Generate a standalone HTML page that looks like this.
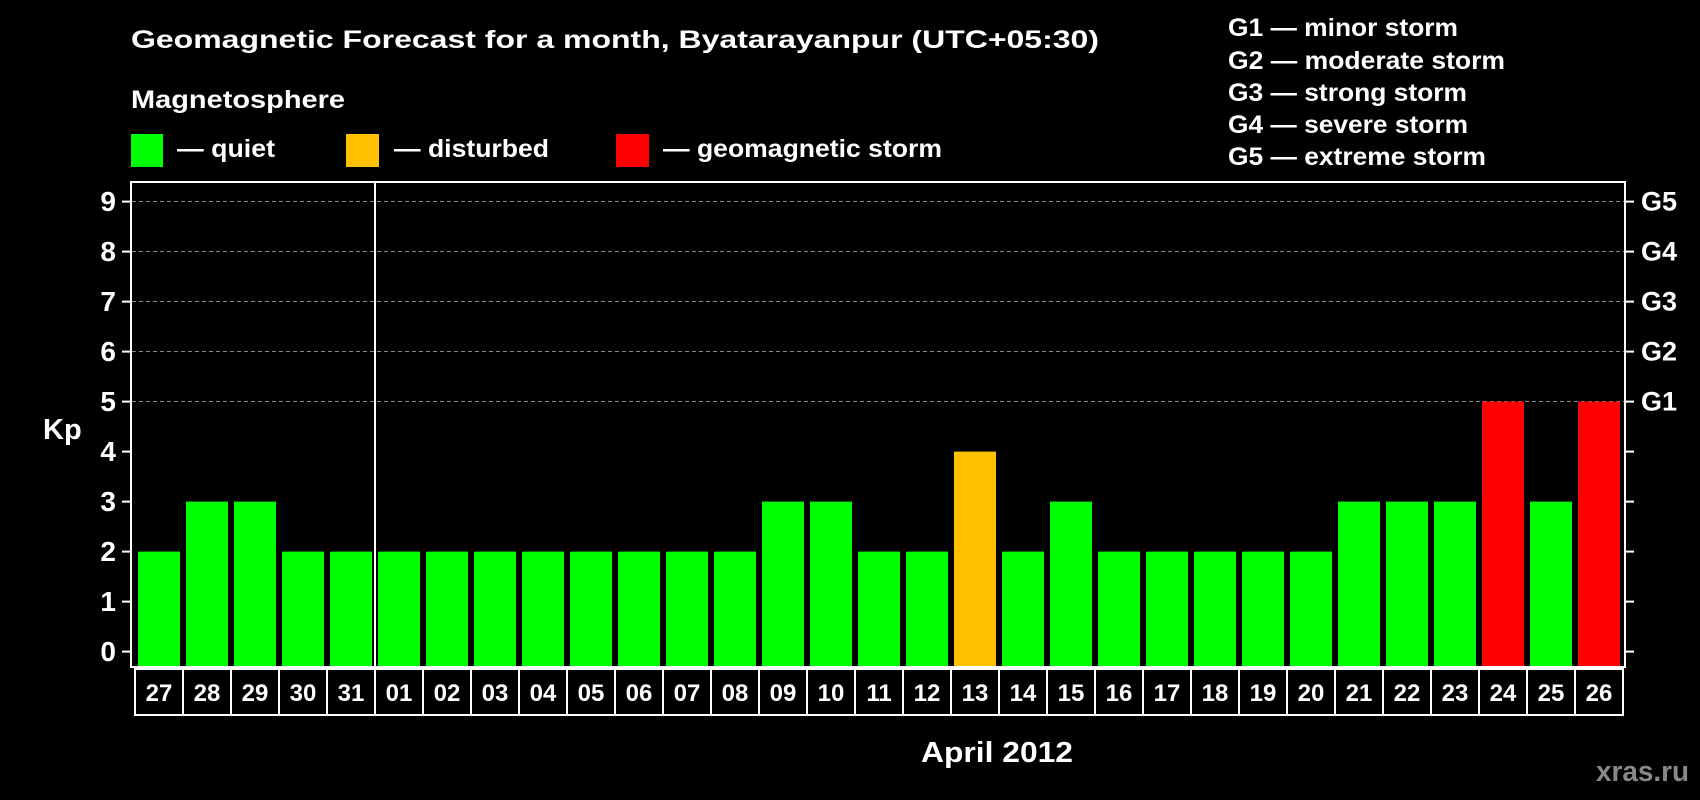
<!DOCTYPE html>
<html><head><meta charset="utf-8"><style>
html,body{margin:0;padding:0;background:#000;width:1700px;height:800px;overflow:hidden}
svg{display:block}
text{font-family:"Liberation Sans",sans-serif;font-weight:bold;fill:#fff}
</style></head><body>
<svg width="1700" height="800" viewBox="0 0 1700 800" xmlns="http://www.w3.org/2000/svg">
<rect width="1700" height="800" fill="#000"/>
<g dominant-baseline="central" font-size="25">
<text x="131" y="40" textLength="968" lengthAdjust="spacingAndGlyphs">Geomagnetic Forecast for a month, Byatarayanpur (UTC+05:30)</text>
<text x="131" y="100" textLength="214" lengthAdjust="spacingAndGlyphs">Magnetosphere</text>
<text x="177" y="149" textLength="98" lengthAdjust="spacingAndGlyphs">— quiet</text>
<text x="394" y="149" textLength="155" lengthAdjust="spacingAndGlyphs">— disturbed</text>
<text x="663" y="149" textLength="279" lengthAdjust="spacingAndGlyphs">— geomagnetic storm</text>
<text x="1228" y="28" textLength="230" lengthAdjust="spacingAndGlyphs">G1 — minor storm</text>
<text x="1228" y="61" textLength="277" lengthAdjust="spacingAndGlyphs">G2 — moderate storm</text>
<text x="1228" y="93" textLength="239" lengthAdjust="spacingAndGlyphs">G3 — strong storm</text>
<text x="1228" y="125" textLength="240" lengthAdjust="spacingAndGlyphs">G4 — severe storm</text>
<text x="1228" y="157" textLength="258" lengthAdjust="spacingAndGlyphs">G5 — extreme storm</text>
<text x="997" y="753" text-anchor="middle" font-size="29" textLength="152" lengthAdjust="spacingAndGlyphs">April 2012</text>
<text x="1689" y="772" text-anchor="end" font-size="29" style="fill:#888" textLength="93" lengthAdjust="spacingAndGlyphs">xras.ru</text>
<text x="43" y="430" font-size="29">Kp</text>
</g>
<rect x="131" y="134" width="32" height="33" fill="#00ff00"/>
<rect x="346" y="134" width="33" height="33" fill="#ffc000"/>
<rect x="616" y="134" width="33" height="33" fill="#ff0000"/>
<g stroke="#888" stroke-width="1" stroke-dasharray="4,3">
<line x1="132" x2="1624" y1="201.5" y2="201.5"/>
<line x1="132" x2="1624" y1="251.5" y2="251.5"/>
<line x1="132" x2="1624" y1="301.5" y2="301.5"/>
<line x1="132" x2="1624" y1="351.5" y2="351.5"/>
<line x1="132" x2="1624" y1="401.5" y2="401.5"/>
</g>
<g id="bars"></g>
<rect x="131" y="182" width="1494" height="485" fill="none" stroke="#fff" stroke-width="2"/>
<line x1="375" y1="182" x2="375" y2="667" stroke="#fff" stroke-width="2"/>
<g id="ticks" stroke="#fff" stroke-width="2"></g>
<g id="labels" dominant-baseline="central"></g>
<g id="days"></g>
</svg>
<script>
(function(){
var NS="http://www.w3.org/2000/svg";
function el(p,t,a,txt){var e=document.createElementNS(NS,t);for(var k in a)e.setAttribute(k,a[k]);if(txt)e.textContent=txt;p.appendChild(e);return e;}
var kp=[2,3,3,2,2,2,2,2,2,2,2,2,2,3,3,2,2,4,2,3,2,2,2,2,2,3,3,3,5,3,5];
var days=["27","28","29","30","31"];for(var i=1;i<=26;i++)days.push((i<10?"0":"")+i);
var bars=document.getElementById("bars"),dg=document.getElementById("days");
for(var i=0;i<31;i++){var v=kp[i];var c=v>=5?"#ff0000":(v==4?"#ffc000":"#00ff00");
var ty=651.6-50*v;el(bars,"rect",{x:138+48*i,y:ty,width:42,height:667-ty,fill:c});
el(dg,"rect",{x:135+48*i,y:669,width:48,height:46,fill:"none",stroke:"#fff","stroke-width":2});
el(dg,"text",{x:159+48*i,y:701,"text-anchor":"middle","font-size":"24"},days[i]);}
var tk=document.getElementById("ticks"),lb=document.getElementById("labels");
for(var k=0;k<=9;k++){var y=651.6-50*k;
el(tk,"line",{x1:122,x2:131,y1:y,y2:y});el(tk,"line",{x1:1625,x2:1634,y1:y,y2:y});
el(lb,"text",{x:116,y:y,"text-anchor":"end","font-size":"28"},""+k);
if(k>=5)el(lb,"text",{x:1641,y:y,"font-size":"27"},"G"+(k-4));}
})();
</script>
</body></html>
